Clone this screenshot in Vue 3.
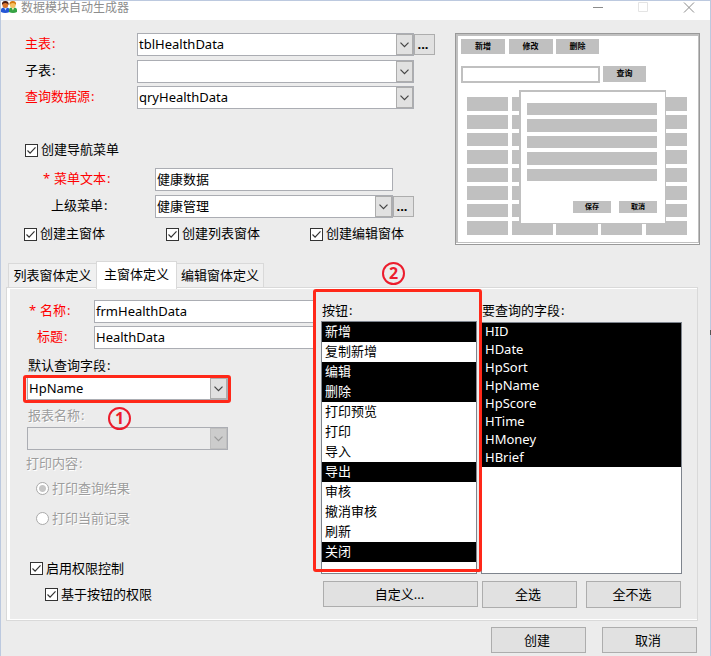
<script setup>
const buttons = [
  ['新增', 1], ['复制新增', 0], ['编辑', 1], ['删除', 1], ['打印预览', 0], ['打印', 0],
  ['导入', 0], ['导出', 1], ['审核', 0], ['撤消审核', 0], ['刷新', 0], ['关闭', 1],
]
const fields = ['HID', 'HDate', 'HpSort', 'HpName', 'HpScore', 'HTime', 'HMoney', 'HBrief']
const sources = [
  { label: '主表', value: 'tblHealthData', red: true, more: true },
  { label: '子表', value: '' },
  { label: '查询数据源', value: 'qryHealthData', red: true },
]
</script>

<template>
  <div class="window">
    <header class="titlebar">
      <svg class="logo" width="16" height="13" viewBox="0 0 16 13">
        <path d="M0 11V9Q0 6.500 3 6.500h2.500Q8.500 6.500 8.500 9V11Q4 13 0 11z" fill="#2456d6" />
        <path d="M3 6.500l1.500 3L6 6.500z" fill="#bfe2ff" />
        <circle cx="4.300" cy="4" r="2.900" fill="#d9742f" />
        <path d="M1 4Q0.500 0 4.300 0T7.600 4Q6.500 2 4.300 2T1 4z" fill="#4a1a10" />
        <path d="M8 11V9Q8 6.500 10.500 6.500h2.500Q16 6.500 16 9V11Q12 13 8 11z" fill="#35a344" />
        <path d="M10.500 6.500l1.400 3 1.400-3z" fill="#eef5c0" />
        <circle cx="11.800" cy="4" r="2.900" fill="#f5c163" />
        <path d="M8.500 4Q8 0 11.800 0T15 4Q14 2 11.800 2T8.500 4z" fill="#d67a12" />
      </svg>
      <span class="title">数据模块自动生成器</span>
      <svg class="controls" width="104" height="13" viewBox="0 0 104 13">
        <path d="M1 6.500h10" stroke="#8b8b8b" />
        <path d="M46.500 1.500h9v9h-9z" fill="none" stroke="#e4e4e4" />
        <path d="M92 1.500l10 10M102 1.500l-10 10" stroke="#8b8b8b" />
      </svg>
    </header>

    <section class="top">
      <div class="setup">
        <div v-for="s in sources" :key="s.label" class="row source">
          <label :class="{ red: s.red }">{{ s.label }}<em>:</em></label>
          <div class="combo wide">
            <span>{{ s.value }}</span>
            <i class="arrow"><svg width="9" height="6" viewBox="0 0 9 6"><path d="M.5 .7l4 4 4-4" /></svg></i>
          </div>
          <button v-if="s.more" class="more">...</button>
        </div>
        <div class="check nav">
          <i class="box"><svg width="11" height="11" viewBox="0 0 11 11"><path d="M1.500 5.500l2.600 2.700 5.400-5.800" /></svg></i>
          <span>创建导航菜单</span>
        </div>
        <div class="row menu">
          <label class="red star"><s>*</s>菜单文本<em>:</em></label>
          <div class="input">健康数据</div>
        </div>
        <div class="row menu parent">
          <label>上级菜单<em>:</em></label>
          <div class="combo">
            <span>健康管理</span>
            <i class="arrow"><svg width="9" height="6" viewBox="0 0 9 6"><path d="M.5 .7l4 4 4-4" /></svg></i>
          </div>
          <button class="more">...</button>
        </div>
        <div class="row forms">
          <div v-for="t in ['创建主窗体', '创建列表窗体', '创建编辑窗体']" :key="t" class="check">
            <i class="box"><svg width="11" height="11" viewBox="0 0 11 11"><path d="M1.500 5.500l2.600 2.700 5.400-5.800" /></svg></i>
            <span>{{ t }}</span>
          </div>
        </div>
      </div>

      <div class="preview">
        <div class="canvas">
          <div class="tools"><b>新增</b><b>修改</b><b>删除</b></div>
          <div class="search"><i></i><b>查询</b></div>
          <div class="cells"><i v-for="n in 40" :key="n"></i></div>
          <div class="dialog">
            <div class="bars"><i v-for="n in 5" :key="n"></i></div>
            <div class="actions"><b>保存</b><b>取消</b></div>
          </div>
        </div>
      </div>
    </section>

    <nav class="tabs">
      <div class="tab first">列表窗体定义</div>
      <div class="tab active">主窗体定义</div>
      <div class="tab last">编辑窗体定义</div>
    </nav>

    <section class="panel">
      <div class="left">
        <div class="row named">
          <label class="red"><s>*</s>名称<em>:</em></label>
          <div class="input">frmHealthData</div>
        </div>
        <div class="row named second">
          <label class="red">标题<em>:</em></label>
          <div class="input">HealthData</div>
        </div>
        <div class="caption default">默认查询字段<em>:</em></div>
        <div class="marked">
          <div class="combo">
            <span>HpName</span>
            <i class="arrow"><svg width="9" height="6" viewBox="0 0 9 6"><path d="M.5 .7l4 4 4-4" /></svg></i>
          </div>
        </div>
        <div class="caption report off">报表名称<em>:</em></div>
        <div class="combo disabled">
          <span></span>
          <i class="arrow"><svg width="9" height="6" viewBox="0 0 9 6"><path d="M.5 .7l4 4 4-4" /></svg></i>
        </div>
        <div class="caption content off">打印内容<em>:</em></div>
        <div class="radio off"><i class="on"></i><span>打印查询结果</span></div>
        <div class="radio off"><i></i><span>打印当前记录</span></div>
        <div class="check rights">
          <i class="box"><svg width="11" height="11" viewBox="0 0 11 11"><path d="M1.500 5.500l2.600 2.700 5.400-5.800" /></svg></i>
          <span>启用权限控制</span>
        </div>
        <div class="check rights sub">
          <i class="box"><svg width="11" height="11" viewBox="0 0 11 11"><path d="M1.500 5.500l2.600 2.700 5.400-5.800" /></svg></i>
          <span>基于按钮的权限</span>
        </div>
      </div>

      <div class="middle">
        <div class="heading">按钮<em>:</em></div>
        <ul class="list actions-list">
          <li v-for="b in buttons" :key="b[0]" :class="{ picked: b[1] }">{{ b[0] }}</li>
        </ul>
        <button class="btn custom">自定义...</button>
        <div class="outline"></div>
      </div>

      <div class="right">
        <div class="heading">要查询的字段<em>:</em></div>
        <ul class="list field-list">
          <li v-for="f in fields" :key="f" class="picked">{{ f }}</li>
        </ul>
        <div class="pair"><button class="btn">全选</button><button class="btn">全不选</button></div>
      </div>
    </section>

    <footer class="footer">
      <button class="btn">创建</button>
      <button class="btn">取消</button>
    </footer>

    <div class="badge one">1</div>
    <div class="badge two">2</div>
    <div class="edge"></div>
  </div>
</template>

<style>
body { margin: 0; overflow: hidden; }
</style>

<style scoped>
* { box-sizing: border-box; }
.window {
  position: relative; display: flex; flex-direction: column;
  width: 711px; height: 656px;
  background: #ececec; border: solid #bcc9df; border-width: 1px 1px 0;
  font: 13px/18px "Noto Sans", "Noto Sans CJK SC", sans-serif; color: #000;
  white-space: nowrap;
}
i { font-style: normal; display: block; }
em { font-style: normal; margin-left: 1px; }
s { text-decoration: none; display: inline-block; width: 11px; }
button { font: inherit; color: #000; padding: 0; margin: 0; border-radius: 0; }
.red { color: #f00; }

.titlebar { display: flex; flex: none; height: 19px; background: #fff; }
.title { margin-left: 4px; font-size: 12px; line-height: 13px; color: #8d8d8d; }
.controls { margin-left: auto; margin-right: 14px; }

.top { display: flex; flex: none; justify-content: space-between; height: 241px; padding: 13px 10px 0 0; }
.setup { width: 440px; }
.row { display: flex; height: 23px; line-height: 21px; }
.source label { width: 136px; padding-left: 24px; }
.source + .source { margin-top: 3px; }
.source:nth-child(2) { margin-top: 4px; }
.combo, .input {
  display: flex; justify-content: space-between; height: 23px; line-height: 21px;
  background: #fff; border: 1px solid #abadb3; padding-left: 1px;
}
.combo { width: 238px; }
.combo.wide { width: 277px; }
.arrow {
  display: flex; align-items: center; justify-content: center; width: 17px; height: 21px;
  padding: 1px 1px 0 0; background: #e1e1e1; border: 1px solid #adadad;
}
.arrow svg path { fill: none; stroke: #444; stroke-width: 1.200; }
.more {
  width: 21px; height: 21px; margin-top: 1px; padding-right: 3px; font-weight: 700; line-height: 17px;
  background: #e1e1e1; border: 1px solid #adadad;
}

.check { display: flex; height: 18px; line-height: 16px; }
.box { width: 13px; height: 13px; margin: 2px 3px 0 0; background: #fff; border: 1px solid #333; }
.box svg { display: block; }
.box path { fill: none; stroke: #333; stroke-width: 1.200; }
.nav { margin: 33px 0 0 24px; line-height: 15px; }
.menu { margin-top: 8px; }
.menu label { width: 154px; padding-left: 50px; }
.menu label.star { padding-left: 42px; }
.menu .input { width: 238px; }
.parent { margin-top: 4px; }
.forms { display: grid; grid-template-columns: 142px 144px auto; height: 18px; margin: 8px 0 0 23px; }
.forms .check { line-height: 14px; }

.preview {
  width: 245px; height: 212px; border: 1px solid #999; background: #fff; padding-bottom: 1px;
}
.canvas { position: relative; height: 209px; padding: 3px 0 0 3px; border: solid #c0c0c0; border-width: 2px 1px 1px 2px; }
.preview b {
  background: #c0c0c0; font-size: 8px; line-height: 13px; text-align: center; font-weight: 700;
}
.tools { display: grid; grid-template-columns: 44px 44px 43px; gap: 3.500px; height: 15px; }
.search { display: flex; gap: 3px; height: 17px; margin-top: 12px; }
.search i { width: 139px; border: 2px solid #c0c0c0; }
.search b { width: 43px; height: 16px; line-height: 14px; }
.cells {
  display: grid; grid-template-columns: repeat(5, 1fr); grid-template-rows: repeat(8, 1fr);
  gap: 4px 3.500px; width: 220px; height: 138px; margin: 14px 0 0 6px;
}
.cells i { background: #c0c0c0; }
.dialog {
  position: absolute; left: 61px; top: 54px; width: 147px; height: 134px; background: #fff;
  border: solid #c0c0c0; border-width: 2px 1px 1px 2px; padding: 11px 8px 0 6px;
}
.bars { display: grid; grid-template-rows: repeat(5, 1fr); gap: 4px; height: 78px; }
.bars i { background: #c0c0c0; }
.actions { display: flex; justify-content: flex-end; gap: 8px; margin-top: 20px; }
.preview .actions b { width: 38px; height: 12px; font-size: 7px; line-height: 11px; }

.tabs { display: flex; flex: none; align-items: flex-end; height: 27px; padding-left: 7px; }
.tab { height: 25px; line-height: 23px; text-align: center; background: #f0f0f0; border: solid #d9d9d9; border-width: 1px 1px 0; }
.first { width: 88px; border-right: 0; }
.last { width: 87px; border-left: 0; }
.active { z-index: 1; width: 81px; height: 28px; margin-bottom: -1px; line-height: 24px; background: #fff; }

.panel {
  display: flex; flex: none; width: 692px; height: 334px; margin: -1px 0 0 5px;
  border: 1px solid #d9d9d9; box-shadow: inset 3px 1px #fff, inset 0 -1px #fff;
}
.left { width: 306px; padding-top: 12px; }
.named label { width: 87px; padding-left: 22px; }
.named .input { width: 219px; border-right: 0; }
.second { margin-top: 3px; }
.named.second label { padding-left: 30px; }
.caption { height: 18px; line-height: 16px; }
.default { margin: 8px 0 0 21px; }
.marked { width: 208px; height: 28px; margin: 0 0 0 16px; padding-left: 1px; border: 3px solid #ff2819; border-radius: 3px; }
.marked .combo { width: 201px; height: 22px; border-top: 0; line-height: 20px; }
.off { color: #9d9d9d; text-shadow: 1px 1px #fff; }
.report { margin: 4px 0 0 21px; }
.disabled { width: 201px; margin: 2px 0 0 20px; background: #ececec; }
.disabled .arrow { background: #ccc; border-color: #bfbfbf; }
.disabled .arrow svg path { stroke: #999; }
.content { margin: 5px 0 0 19px; }
.radio { display: flex; height: 18px; line-height: 16px; margin: 7px 0 0 29px; }
.radio + .radio { margin-top: 12px; }
.radio i { width: 13px; height: 13px; margin: 2px 3px 0 0; background: #fff; border: 1px solid #aaa; border-radius: 50%; }
.radio i.on { background: radial-gradient(circle, #c6c6c6 3px, #fff 4px); }
.rights { margin: 32px 0 0 23px; }
.rights.sub { margin: 8px 0 0 38px; }

.middle { position: relative; width: 168px; padding: 13px 0 0 8px; }
.outline { position: absolute; left: 0; top: 1px; width: 169px; height: 283px; border: 3px solid #ff2819; border-radius: 3px; }
.heading { height: 20px; line-height: 18px; }
.middle .heading { padding-left: 1px; }
.list { list-style: none; margin: 0; padding: 0; background: #fff; border: 1px solid #7e848d; }
.list li { padding-left: 3px; }
.list .picked { background: #000; color: #fff; }
.actions-list { width: 156px; height: 253px; line-height: 19px; }
.actions-list li { height: 20px; }
.field-list { width: 201px; height: 252px; margin-top: 1px; line-height: 17px; }
.field-list li { height: 18px; }
.right { padding-top: 13px; }
.right .heading { padding-left: 1px; }
.btn { width: 95px; height: 27px; line-height: 23px; background: #e1e1e1; border: 1px solid #adadad; }
.custom { width: 155px; height: 26px; margin: 7px 0 0 2px; padding-right: 2px; display: block; }
.pair { display: flex; gap: 9px; margin: 7px 0 0 1px; }
.pair .btn, .footer .btn { padding-right: 3px; }
.footer { display: flex; justify-content: flex-end; gap: 16px; padding: 6px 13px 0 0; }
.footer .btn { height: 26px; }

.badge {
  position: absolute; width: 23px; height: 23px; border: 2px solid #ec1c2c; border-radius: 50%;
  color: #ec1c2c; font: 700 16px/19px "Noto Sans", sans-serif; text-align: center;
}
.one { left: 107px; top: 406px; }
.two { left: 381px; top: 261px; }
.edge { position: absolute; right: -1px; top: 329px; width: 1px; height: 5px; background: #555; }
</style>
